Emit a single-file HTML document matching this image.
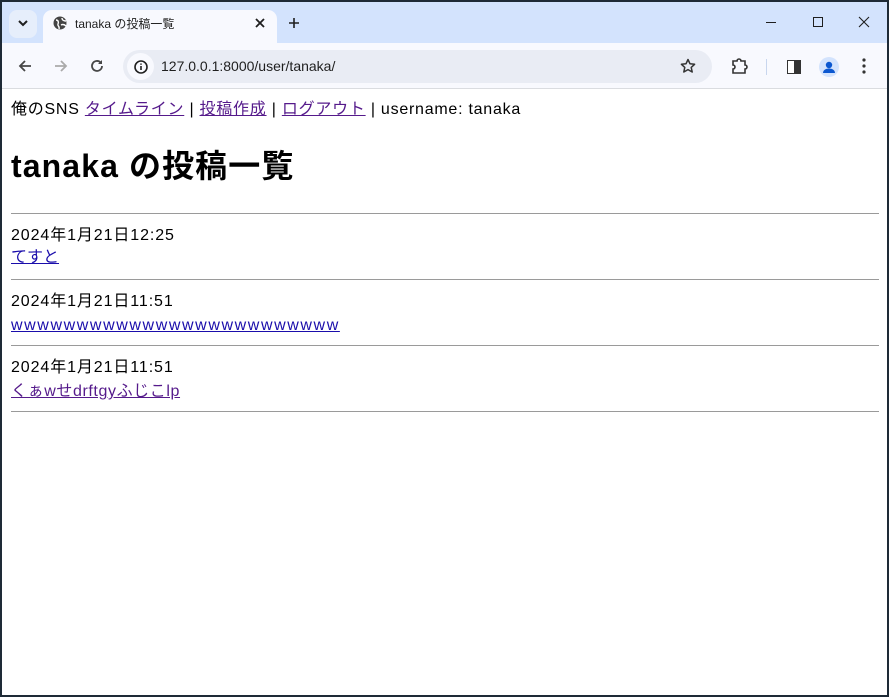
<!DOCTYPE html>
<html><head><meta charset="utf-8"><style>
*{margin:0;padding:0;box-sizing:border-box}
body{width:889px;height:697px;background:#1e2a36;position:relative;overflow:hidden;font-family:"Liberation Sans","Noto Sans CJK JP",sans-serif}
#win{position:absolute;left:2px;top:2px;width:885px;height:693px;background:#fff;overflow:hidden}
#tabs{position:absolute;left:0;top:0;width:885px;height:41px;background:#d3e3fd}
#tb{position:absolute;left:0;top:41px;width:885px;height:46px;background:#f8f9fe;border-bottom:1px solid #dadce0}
.a{position:absolute}
.t{position:absolute;white-space:nowrap;font-size:16px;color:#000;line-height:20px}
a{color:#1a0dab;text-decoration:underline}
a.v{color:#551a8b}
hr{position:absolute;left:9px;width:868px;border:0;border-top:1px solid #9a9a9a;height:0}
</style></head><body><div id="win">
<div id="tabs">
 <div class="a" style="left:7px;top:8px;width:28px;height:28px;border-radius:8px;background:#e6eefb"></div>
 <svg class="a" style="left:15px;top:17px" width="12" height="8"><path d="M2 2l4 4 4-4" stroke="#1f1f1f" stroke-width="2" fill="none"/></svg>
 <div class="a" style="left:41px;top:8px;width:234px;height:34px;background:#f8f9fe;border-radius:9px 9px 0 0"></div>
 <svg class="a" style="left:51px;top:14px" width="14" height="14"><circle cx="7" cy="7" r="6.5" fill="#444"/><path d="M3 4c2 0 3 2 2 4s2 2 1 5M9 2c0 2 2 3 4 3M8 9c2-1 4 0 5 1" stroke="#fff" stroke-width="1.4" fill="none"/></svg>
 <div class="t" style="left:73px;top:12px;font-size:12px;color:#1f1f1f">tanaka の投稿一覧</div>
 <svg class="a" style="left:252px;top:15px" width="12" height="12"><path d="M2 2l8 8M10 2l-8 8" stroke="#1f1f1f" stroke-width="1.8"/></svg>
 <svg class="a" style="left:286px;top:15px" width="12" height="12"><path d="M6 1v10M1 6h10" stroke="#1f1f1f" stroke-width="1.6"/></svg>
 <div class="a" style="left:764px;top:20px;width:10px;height:1px;background:#1f1f1f"></div>
 <div class="a" style="left:811px;top:15px;width:10px;height:10px;border:1px solid #1f1f1f"></div>
 <svg class="a" style="left:856px;top:14px" width="12" height="12"><path d="M1 1l10 10M11 1l-10 10" stroke="#1f1f1f" stroke-width="1.1"/></svg>
</div>
<div id="tb">
 <svg class="a" style="left:16px;top:16px" width="14" height="14"><path d="M13 7H2M7 2L2 7l5 5" stroke="#474747" stroke-width="1.8" fill="none"/></svg>
 <svg class="a" style="left:52px;top:16px" width="14" height="14"><path d="M1 7h11M7 2l5 5-5 5" stroke="#aaa" stroke-width="1.8" fill="none"/></svg>
 <svg class="a" style="left:88px;top:16px" width="14" height="14"><path d="M12 7a5 5 0 1 1-1.5-3.6" stroke="#474747" stroke-width="1.8" fill="none"/><path d="M12 1v4H8z" fill="#474747"/></svg>
 <div class="a" style="left:121px;top:7px;width:589px;height:33px;border-radius:17px;background:#e9ecf4"></div>
 <div class="a" style="left:125px;top:10px;width:27px;height:27px;border-radius:14px;background:#f8f9fe"></div>
 <svg class="a" style="left:132px;top:17px" width="14" height="14"><circle cx="7" cy="7" r="6" stroke="#1f1f1f" stroke-width="1.6" fill="none"/><path d="M7 6v4M7 3.5v1.3" stroke="#1f1f1f" stroke-width="1.6"/></svg>
 <div class="t" style="left:159px;top:13px;font-size:14px;color:#1f1f1f">127.0.0.1:8000/user/tanaka/</div>
 <svg class="a" style="left:678px;top:15px" width="16" height="16"><path d="M8 1.5l2 4.3 4.6.5-3.4 3.1 1 4.6L8 11.6 3.8 14l1-4.6L1.4 6.3 6 5.8z" stroke="#333" stroke-width="1.5" fill="none" stroke-linejoin="round"/></svg>
 <svg class="a" style="left:729px;top:14px" width="18" height="18"><path d="M2 4h4a2 2 0 0 1 4 0h4v4a2 2 0 0 1 0 4v4H2v-4a2 2 0 0 0 0-4z" stroke="#333" stroke-width="1.6" fill="none"/></svg>
 <div class="a" style="left:764px;top:16px;width:1px;height:16px;background:#c8d6ee"></div>
 <div class="a" style="left:785px;top:17px;width:14px;height:14px;border:1.5px solid #333;background:linear-gradient(90deg,#fff 50%,#333 50%)"></div>
 <div class="a" style="left:817px;top:14px;width:20px;height:20px;border-radius:10px;background:#d3e3fd"></div>
 <svg class="a" style="left:817px;top:14px" width="20" height="20"><circle cx="10" cy="8" r="3.2" fill="#0b57d0"/><path d="M4 16c0-3 3-4.5 6-4.5s6 1.5 6 4.5z" fill="#0b57d0"/></svg>
 <svg class="a" style="left:860px;top:14px" width="4" height="18"><circle cx="2" cy="3" r="1.6" fill="#333"/><circle cx="2" cy="9" r="1.6" fill="#333"/><circle cx="2" cy="15" r="1.6" fill="#333"/></svg>
</div>
<div class="a" style="left:0;top:88px;width:885px;height:605px">
 <div class="t" style="left:9px;top:10px;letter-spacing:0.75px">俺のSNS <a class="v" href="#">タイムライン</a> | <a class="v" href="#">投稿作成</a> | <a class="v" href="#">ログアウト</a> | username: tanaka</div>
 <div class="t" style="left:9px;top:56px;font-size:32px;font-weight:bold;line-height:40px;letter-spacing:1.1px">tanaka の投稿一覧</div>
 <hr style="top:123px">
 <div class="t" style="left:9px;top:136px;letter-spacing:0.9px">2024年1月21日12:25</div>
 <div class="t" style="left:9px;top:158px"><a href="#">てすと</a></div>
 <hr style="top:189px">
 <div class="t" style="left:9px;top:202px;letter-spacing:0.9px">2024年1月21日11:51</div>
 <div class="t" style="left:9px;top:226px;letter-spacing:1.6px"><a href="#">wwwwwwwwwwwwwwwwwwwwwwwww</a></div>
 <hr style="top:255px">
 <div class="t" style="left:9px;top:268px;letter-spacing:0.9px">2024年1月21日11:51</div>
 <div class="t" style="left:9px;top:292px;letter-spacing:0.6px"><a class="v" href="#">くぁwせdrftgyふじこlp</a></div>
 <hr style="top:321px">
</div>
</div></body></html>
